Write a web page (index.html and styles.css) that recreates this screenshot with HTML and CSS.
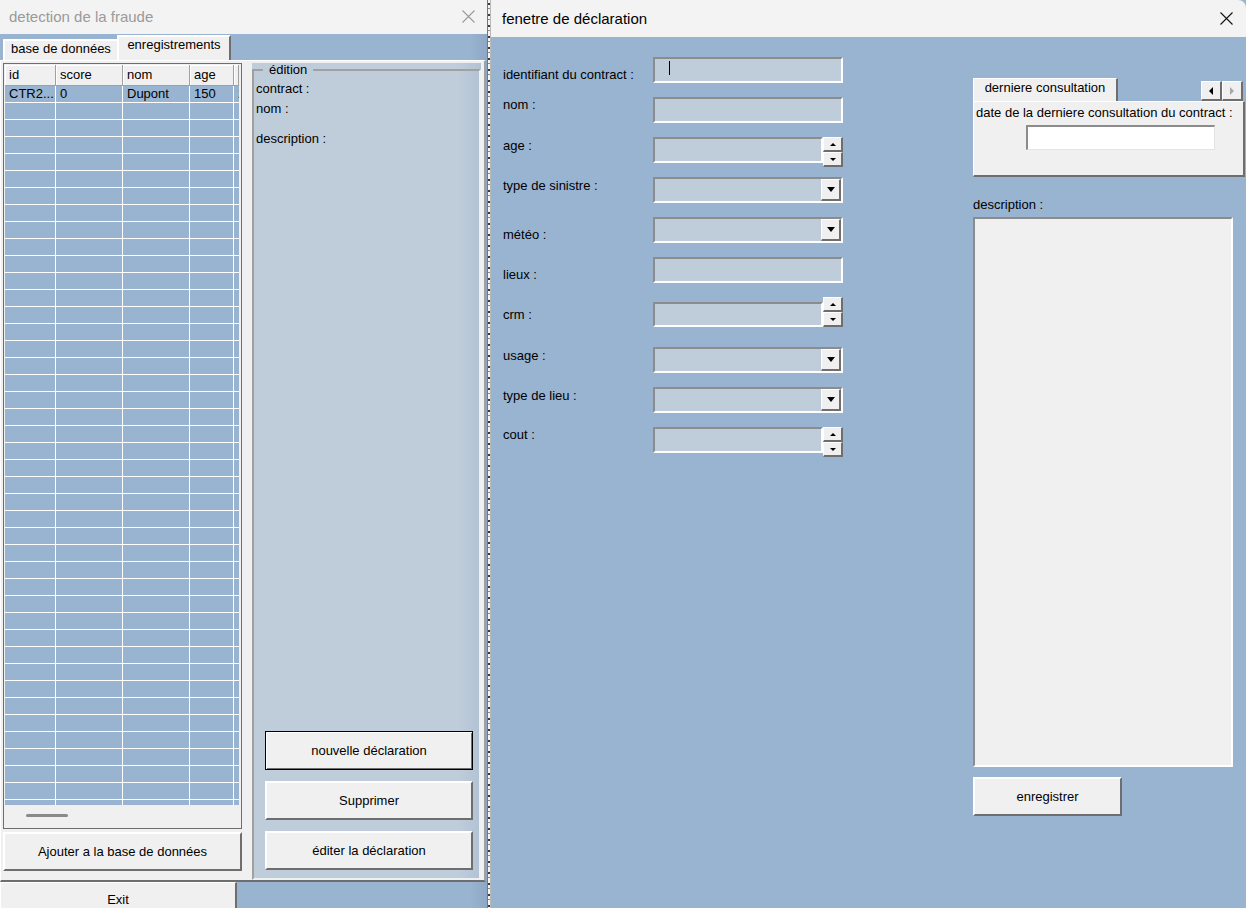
FILE: index.html
```html
<!DOCTYPE html>
<html lang="fr">
<head>
<meta charset="utf-8">
<title>detection de la fraude</title>
<link rel="stylesheet" href="styles.css">
</head>
<body>
<div class="desk">
  <section class="win win-left">
    <header class="titlebar inactive">
      <span class="title">detection de la fraude</span>
      <svg class="close" viewBox="0 0 13 13" width="13" height="13"><path d="M0.5 0.5 L12.5 12.5 M12.5 0.5 L0.5 12.5" stroke="#9a9a9a" stroke-width="1.1" fill="none"/></svg>
    </header>
    <div class="tabstrip">
      <div class="tab tab-back">base de données</div>
      <div class="tab tab-active">enregistrements</div>
    </div>
    <div class="page">
      <div class="col-list">
        <div class="listbox">
          <div class="lb-head">
            <div class="hc c1">id</div>
            <div class="hc c2">score</div>
            <div class="hc c3">nom</div>
            <div class="hc c4">age</div>
            <div class="hc c5">d</div>
          </div>
          <div class="lb-rows">
            <div class="lb-row">
              <div class="cell c1">CTR2...</div>
              <div class="cell c2">0</div>
              <div class="cell c3">Dupont</div>
              <div class="cell c4">150</div>
              <div class="cell c5">2</div>
            </div>
          </div>
          <div class="lb-hscroll"><span class="thumb"></span></div>
        </div>
        <button class="btn btn-add">Ajouter a la base de données</button>
      </div>
      <div class="frame">
        <fieldset class="fs">
          <legend>édition</legend>
          <div class="fl">contract :</div>
          <div class="fl">nom :</div>
          <div class="fl fl-desc">description :</div>
          <div class="frame-btns">
            <button class="btn btn-default">nouvelle déclaration</button>
            <button class="btn">Supprimer</button>
            <button class="btn">éditer la déclaration</button>
          </div>
        </fieldset>
      </div>
    </div>
    <div class="bottom-row">
      <button class="btn btn-exit">Exit</button>
    </div>
  </section>

  <div class="sliver"></div>

  <section class="win win-right">
    <header class="titlebar">
      <span class="title">fenetre de déclaration</span>
      <svg class="close" viewBox="0 0 13 13" width="13" height="13"><path d="M0.5 0.5 L12.5 12.5 M12.5 0.5 L0.5 12.5" stroke="#111" stroke-width="1.1" fill="none"/></svg>
    </header>
    <div class="rbody">
      <div class="form">
        <div class="frow">
          <div class="flabel low">identifiant du contract :</div>
          <div class="tb"><span class="caret"></span></div>
        </div>
        <div class="frow">
          <div class="flabel">nom :</div>
          <div class="tb"></div>
        </div>
        <div class="frow">
          <div class="flabel mid">age :</div>
          <div class="spinwrap">
            <div class="tb"></div>
            <div class="spin"><span><i class="tri-up"></i></span><span><i class="tri-dn"></i></span></div>
          </div>
        </div>
        <div class="frow">
          <div class="flabel mid">type de sinistre :</div>
          <div class="tb combo"><span class="dd"><i class="tri-down"></i></span></div>
        </div>
        <div class="frow">
          <div class="flabel low">météo :</div>
          <div class="tb combo"><span class="dd"><i class="tri-down"></i></span></div>
        </div>
        <div class="frow">
          <div class="flabel low">lieux :</div>
          <div class="tb"></div>
        </div>
        <div class="frow tall">
          <div class="flabel low">crm :</div>
          <div class="spinwrap bottom">
            <div class="tb short"></div>
            <div class="spin"><span><i class="tri-up"></i></span><span><i class="tri-dn"></i></span></div>
          </div>
        </div>
        <div class="frow">
          <div class="flabel mid">usage :</div>
          <div class="tb combo"><span class="dd"><i class="tri-down"></i></span></div>
        </div>
        <div class="frow">
          <div class="flabel mid">type de lieu :</div>
          <div class="tb combo"><span class="dd"><i class="tri-down"></i></span></div>
        </div>
        <div class="frow">
          <div class="flabel">cout :</div>
          <div class="spinwrap">
            <div class="tb"></div>
            <div class="spin"><span><i class="tri-up"></i></span><span><i class="tri-dn"></i></span></div>
          </div>
        </div>
      </div>

      <div class="rpanel">
        <div class="rtabstrip">
          <div class="rtab">derniere consultation</div>
          <div class="arrows">
            <span class="ab"><i class="tri-left"></i></span>
            <span class="ab"><i class="tri-right"></i></span>
          </div>
        </div>
        <div class="rtabpage">
          <div class="rlabel">date de la derniere consultation du contract :</div>
          <div class="datebox"></div>
        </div>
        <div class="desc-label">description :</div>
        <div class="descbox"></div>
        <button class="btn btn-save">enregistrer</button>
      </div>
    </div>
  </section>
</div>
</body>
</html>
```

FILE: styles.css
```css
* { box-sizing: border-box; }
html, body { margin: 0; padding: 0; }
body {
  width: 1246px;
  height: 908px;
  overflow: hidden;
  font-family: "Liberation Sans", Arial, sans-serif;
  font-size: 13px;
  color: #000;
  background: #99b4d1;
}
.desk { display: flex; height: 908px; }

/* windows */
.win { flex: none; display: flex; flex-direction: column; overflow: hidden; }
.win-left {
  width: 487px;
  background: linear-gradient(90deg, #99b4d1 0, #99b4d1 470px, #8da7c5 487px);
}
.win-right {
  width: 756px;
  background: #99b4d1;
  border-left: 1px solid #b8b8b8;
  border-top-right-radius: 8px;
}
.titlebar {
  flex: none;
  display: flex;
  align-items: center;
  justify-content: space-between;
  background: #f3f3f3;
  font-size: 15px;
}
.win-left .titlebar { height: 34px; padding: 0 12px 2px 9px; }
.win-right .titlebar { height: 37px; padding: 0 13px 0 11px; }
.titlebar.inactive .title { color: #9a9a9a; }
.close { display: block; }

/* left tab strip */
.tabstrip {
  flex: none;
  height: 26px;
  display: flex;
  align-items: flex-end;
  padding-left: 3px;
}
.tab {
  width: 114px;
  background: #f0f0f0;
  border-top: 2px solid #fff;
  border-left: 2px solid #fff;
  text-align: center;
  white-space: nowrap;
}
.tab-back { height: 21px; line-height: 15px; }
.tab-active { height: 25px; line-height: 16px; border-right: 2px solid #6e6e6e; }

/* page */
.page {
  flex: none;
  width: 486px;
  height: 822px;
  display: flex;
  gap: 10px;
  background: #f0f0f0;
  border-top: 1px solid #fff;
  border-left: 1px solid #fff;
  border-right: 2px solid #a0a0a0;
  border-bottom: 2px solid #6e6e6e;
  padding: 2px 3px 0 2px;
}
.col-list { width: 239px; flex: none; display: flex; flex-direction: column; gap: 3px; }

.listbox {
  height: 766px;
  flex: none;
  display: flex;
  flex-direction: column;
  background: #f0f0f0;
  border: 1px solid #6e6e6e;
  padding: 1px 2px 1px 1px;
}
.lb-head { flex: none; height: 21px; display: flex; overflow: hidden; }
.hc {
  background: #f0f0f0;
  border-right: 1px solid #a0a0a0;
  border-bottom: 1px solid #a0a0a0;
  box-shadow: inset 1px 1px 0 #fff;
  padding-left: 4px;
  line-height: 20px;
  white-space: nowrap;
  overflow: hidden;
}
.c1 { width: 51px; flex: none; }
.c2 { width: 67px; flex: none; }
.c3 { width: 67px; flex: none; }
.c4 { width: 44px; flex: none; }
.c5 { flex: 1; min-width: 0; }

.lb-rows {
  flex: 1;
  overflow: hidden;
  background-color: #99b4d1;
  background-image:
    linear-gradient(90deg, transparent 0 50px, #fff 50px 51px, transparent 51px 117px, #fff 117px 118px, transparent 118px 184px, #fff 184px 185px, transparent 185px 228px, #fff 228px 229px, transparent 229px),
    repeating-linear-gradient(180deg, transparent 0 16px, #fff 16px 17px);
}
.lb-row { display: flex; height: 17px; line-height: 16px; }
.cell { padding-left: 4px; white-space: nowrap; overflow: hidden; }

.lb-hscroll { flex: none; height: 22px; padding-top: 9px; }
.thumb {
  display: block;
  width: 42px;
  height: 3px;
  margin-left: 21px;
  border-radius: 2px;
  background: #8a8a8a;
}

/* buttons */
.btn {
  font-family: inherit;
  font-size: 13px;
  color: #000;
  background: #f0f0f0;
  border-style: solid;
  border-width: 2px;
  border-color: #fff #6e6e6e #6e6e6e #fff;
  padding: 0;
  height: 39px;
  flex: none;
}
.btn-add { width: 239px; }
.btn-default {
  border: 1px solid #000;
  box-shadow: inset 1px 1px 0 #fff, inset -1px -1px 0 #6e6e6e;
}

/* frame */
.frame {
  width: 229px;
  height: 817px;
  flex: none;
  background: linear-gradient(90deg, #bfcddb 0, #bfcddb 205px, #b2c2d4 229px);
}
.fs {
  margin: 0;
  height: 100%;
  min-width: 0;
  border-style: solid;
  border-width: 2px;
  border-color: #a0a0a0 #eef1f4 #eef1f4 #a0a0a0;
  padding: 2px 2px 8px 2px;
  display: flex;
  flex-direction: column;
}
.fs legend {
  margin-left: 7px;
  padding: 0 6px;
  line-height: 14px;
}
.fl { line-height: 20px; }
.fl-desc { margin-top: 10px; }
.frame-btns {
  margin-top: auto;
  margin-left: 9px;
  width: 208px;
  display: flex;
  flex-direction: column;
  gap: 11px;
}

/* bottom row */
.bottom-row { flex: none; height: 34px; display: flex; }
.btn-exit {
  width: 237px;
  height: 34px;
  border-width: 1px 2px 0 1px;
  line-height: 30px;
}

/* sliver between windows */
.sliver {
  width: 3px;
  flex: none;
  background: repeating-linear-gradient(180deg, #f4f4f4 0 3px, #3a3a3a 3px 5px, #f4f4f4 5px 8px, #8a8a8a 8px 9px, #f4f4f4 9px 11px);
  border-left: 1px solid #777;
}

/* right window body */
.rbody { flex: 1; display: flex; }
.form { width: 352px; flex: none; padding: 20px 0 0 12px; }
.frow { display: flex; height: 40px; }
.frow.tall { height: 50px; }
.flabel { width: 150px; flex: none; line-height: 16px; white-space: nowrap; }
.flabel.low { margin-top: 10px; }
.flabel.mid { margin-top: 1px; }

.tb {
  width: 190px;
  height: 26px;
  background: #bfcddb;
  border-style: solid;
  border-width: 2px;
  border-color: #8c8c8c #fff #fff #8c8c8c;
}
.tb.short { height: 25px; }
.caret { display: block; width: 1px; height: 14px; background: #000; margin: 2px 0 0 14px; }
.combo { display: flex; justify-content: flex-end; }
.dd {
  width: 20px;
  height: 22px;
  background: #f0f0f0;
  border-style: solid;
  border-width: 1px 2px 2px 1px;
  border-color: #fff #6e6e6e #6e6e6e #fff;
  display: flex;
  align-items: center;
  justify-content: center;
}
.tri-down {
  display: block;
  width: 0; height: 0;
  border-left: 4.5px solid transparent;
  border-right: 4.5px solid transparent;
  border-top: 5px solid #000;
}
.spinwrap { display: flex; align-items: flex-start; height: 30px; }
.spinwrap.bottom { align-items: flex-end; }
.spinwrap .tb { width: 170px; }
.spin { width: 20px; height: 30px; flex: none; display: flex; flex-direction: column; }
.spin span {
  flex: 1;
  background: #f0f0f0;
  border-style: solid;
  border-width: 1px 2px 2px 1px;
  border-color: #fff #6e6e6e #6e6e6e #fff;
  display: flex;
  align-items: center;
  justify-content: center;
}
.tri-up {
  display: block; width: 0; height: 0;
  border-left: 3px solid transparent;
  border-right: 3px solid transparent;
  border-bottom: 3px solid #000;
}
.tri-dn {
  display: block; width: 0; height: 0;
  border-left: 3px solid transparent;
  border-right: 3px solid transparent;
  border-top: 3px solid #000;
}

/* right panel */
.rpanel {
  width: 272px;
  flex: none;
  margin-left: 130px;
  padding-top: 41px;
  display: flex;
  flex-direction: column;
}
.rtabstrip {
  height: 23px;
  display: flex;
  justify-content: space-between;
  align-items: flex-end;
  padding-right: 2px;
}
.rtab {
  width: 145px;
  height: 23px;
  background: #f0f0f0;
  border-top: 1px solid #fff;
  border-left: 1px solid #fff;
  border-right: 2px solid #6e6e6e;
  text-align: center;
  line-height: 18px;
  white-space: nowrap;
}
.arrows { display: flex; }
.ab {
  width: 21px;
  height: 20px;
  background: #f0f0f0;
  border-style: solid;
  border-width: 1px 2px 2px 1px;
  border-color: #fff #6e6e6e #6e6e6e #fff;
  display: flex;
  align-items: center;
  justify-content: center;
}
.tri-left {
  display: block; width: 0; height: 0;
  border-top: 4px solid transparent;
  border-bottom: 4px solid transparent;
  border-right: 4px solid #000;
}
.tri-right {
  display: block; width: 0; height: 0;
  border-top: 4px solid transparent;
  border-bottom: 4px solid transparent;
  border-left: 4px solid #a8a8a8;
}
.rtabpage {
  height: 76px;
  background: #f0f0f0;
  border-style: solid;
  border-width: 1px 2px 2px 1px;
  border-color: #fff #6e6e6e #6e6e6e #fff;
  padding: 3px 0 0 2px;
}
.rlabel { line-height: 16px; white-space: nowrap; }
.datebox {
  margin: 4px 0 0 50px;
  width: 189px;
  height: 25px;
  background: #fff;
  border-style: solid;
  border-width: 2px 1px 1px 2px;
  border-color: #8c8c8c #e3e3e3 #e3e3e3 #8c8c8c;
}
.desc-label { margin-top: 20px; line-height: 16px; }
.descbox {
  margin-top: 4px;
  width: 260px;
  height: 550px;
  background: #f0f0f0;
  border-style: solid;
  border-width: 2px;
  border-color: #8c8c8c #fff #fff #8c8c8c;
}
.btn-save { margin-top: 10px; width: 149px; }
```
